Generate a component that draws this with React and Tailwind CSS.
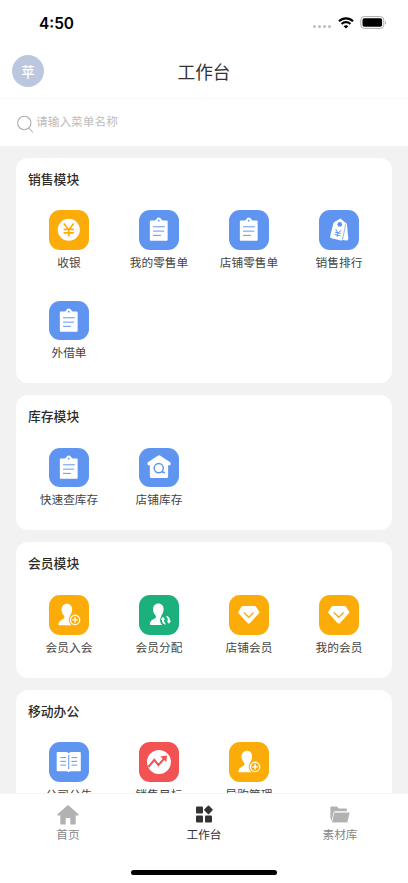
import React from "react";

const BLUE = "#5f95f1";
const ORANGE = "#fcac09";

const tones = {
  blue: "bg-[#5f95f1]",
  orange: "bg-[#fcac09]",
  green: "bg-[#1bb07c]",
  red: "bg-[#f25251]",
};

function Yen() {
  return (
    <>
      <circle cx="20" cy="20" r="11.2" fill="#fff" />
      <path d="M15 13.700 20 20l5-6.300M20 20v6.500M14.800 19.600h10.400M14.800 23.200h10.400" fill="none" stroke={ORANGE} strokeWidth="1.700" />
    </>
  );
}

function Clipboard() {
  return (
    <>
      <path d="M11.800 10.600h4.200l1.400-1a2.700 2.700 0 0 1 5.200 0l1.400 1h4.200q.8 0 .8.800v18.900q0 .8-.8.800H11.800q-.8 0-.8-.8V11.400q0-.8.8-.8Z" fill="#fff" />
      <circle cx="20" cy="10.800" r=".9" fill={BLUE} />
      <path d="M14.200 17h12M14.200 21.400h11.200M14.200 25.700h8" stroke={BLUE} strokeWidth="1" />
    </>
  );
}

function Tags() {
  return (
    <>
      <path d="m22 9 6.200 4.800 1.500 15.500q-.2 1.700-2 1.500l-5-.6Z" fill="#fff" />
      <path d="m21.700 8.700 5 4.600q.8 1 .6 2.200l-3 13.800q-.4 1.800-2.200 1.500l-9.600-2.300q-1.600-.4-1.200-2l3.200-12.700q.4-1.300 1.600-1.900Z" fill="#fff" />
      <path d="m27 14.500-3.200 15.500" stroke={BLUE} strokeWidth=".7" />
      <circle cx="21" cy="14.600" r="2.400" fill={BLUE} />
      <path d="m16.800 19.300 2.300 4 3.500-2.700M19.100 23.300l-.9 4M16 22.400l6 1.400M15.600 24.700l6 1.400" fill="none" stroke={BLUE} strokeWidth="1" />
    </>
  );
}

function StoreSearch() {
  return (
    <>
      <path d="M19.400 7.600q.9-.6 1.800 0l10.400 6.800q.5.400.4 1v1.200q-.1.800-1 .8h-1.500v11.400q0 1.600-1.600 1.600H12.600q-1.600 0-1.600-1.600V17.400H9.600q-.9 0-1-.8v-1.200q0-.6.400-1Z" fill="#fff" />
      <circle cx="20" cy="20.400" r="4.600" fill="none" stroke={BLUE} strokeWidth="1.500" />
      <path d="m23 24 3.200 1" stroke={BLUE} strokeWidth="1.500" />
    </>
  );
}

function Person() {
  return <path d="M18 8.800c3.400 0 5.600 2.400 5.400 6.200-.1 2.500-1 4.400-2.100 5.900-.6 1-.2 2.100.8 2.700l4.500 3.100v4H10.200q-1-.1-.7-1.200.5-3.300 3-4.300l2.200-1.100c1.200-.6 1.200-2.100.5-3.200-1.500-1.900-2.600-4.100-2.500-6.500C12.900 11.200 15 8.800 18 8.800Z" fill="#fff" />;
}

function PersonAdd() {
  return (
    <>
      <Person />
      <circle cx="26.400" cy="25.200" r="6.400" fill={ORANGE} />
      <circle cx="26.400" cy="25.200" r="4.700" fill="none" stroke="#fff" strokeWidth="1.300" />
      <path d="M23.500 25.200h5.800M26.400 22.300v5.800" stroke="#fff" strokeWidth="1.300" />
    </>
  );
}

function PersonSwap() {
  return (
    <>
      <g transform="translate(1.500 -.3)"><Person /></g>
      <circle cx="27.300" cy="25.600" r="6" fill="#1bb07c" />
      <path d="m21.900 25 2.400-2.900 2.300 2.900h-1.300q-.2 2.500 1.500 3.700v1.500q-3.800-1.400-3.500-5.200ZM32.700 26.200l-2.400 2.900-2.300-2.900h1.300q.2-2.500-1.500-3.700V21q3.800 1.400 3.500 5.200Z" fill="#fff" />
    </>
  );
}

function Diamond() {
  return (
    <>
      <path d="M14.200 11.100h11.600q1 0 1.600.8l3 4.700q.6 1 .1 1.700l-9.200 10q-1.300 1.200-2.600 0l-9.200-10q-.6-.8.100-1.700l3-4.700q.6-.8 1.600-.8Z" fill="#fff" />
      <path d="m15 17.800 5 4.800 5-4.800" fill="none" stroke={ORANGE} strokeWidth="1.300" />
    </>
  );
}

function Book() {
  return (
    <>
      <path d="M8.600 10.200h8.200q2.200 0 3.200 1.200 1-1.200 3.200-1.200h8.200q.8 0 .8.800v17.800q0 .8-.8.800H23q-2 0-3 .9-1-.9-3-.9H8.600q-.8 0-.8-.8V11q0-.8.8-.8Z" fill="#fff" />
      <path d="M20 13V27.500" stroke={BLUE} strokeWidth="1" />
      <path d="M11.500 15.800h5.700M11.500 19.600h5.700M11.500 23.400h5.700M22.800 15.800h5.700M22.800 19.600h5.700M22.800 23.400h5.700" stroke={BLUE} strokeWidth="1" />
    </>
  );
}

function Trend() {
  return (
    <>
      <circle cx="20.200" cy="20.200" r="12.100" fill="#fff" />
      <path d="m9.500 25.200 6-7 4.200 5.300 5.800-7" fill="none" stroke="#f25251" strokeWidth="2.100" />
      <path d="m21.500 14.600 6.800-.9-.6 6.600Z" fill="#f25251" />
    </>
  );
}

const sections = [
  {
    title: "销售模块",
    height: "h-[225.300px]",
    items: [
      ["收银", "orange", Yen],
      ["我的零售单", "blue", Clipboard],
      ["店铺零售单", "blue", Clipboard],
      ["销售排行", "blue", Tags],
      ["外借单", "blue", Clipboard],
    ],
  },
  {
    title: "库存模块",
    height: "h-[135.300px]",
    items: [
      ["快速查库存", "blue", Clipboard],
      ["店铺库存", "blue", StoreSearch],
    ],
  },
  {
    title: "会员模块",
    height: "h-[135.300px]",
    items: [
      ["会员入会", "orange", PersonAdd],
      ["会员分配", "green", PersonSwap],
      ["店铺会员", "orange", Diamond],
      ["我的会员", "orange", Diamond],
    ],
  },
  {
    title: "移动办公",
    height: "h-[135.300px]",
    items: [
      ["公司公告", "blue", Book],
      ["销售目标", "red", Trend],
      ["导购管理", "orange", PersonAdd],
    ],
  },
];

function Section({ title, height, items }) {
  return (
    <section className={`${height} shrink-0 rounded-[12px] bg-white px-2 pt-[11px]`}>
      <h2 className="h-[41.600px] pl-1 text-[12.800px] leading-[19px] font-medium text-[#2b2b2b]">{title}</h2>
      <div className="grid grid-cols-4">
        {items.map(([label, tone, Glyph]) => (
          <div key={label} className="flex h-[90.200px] flex-col items-center">
            <div className={`size-[39.500px] shrink-0 rounded-[11px] ${tones[tone]}`}>
              <svg viewBox="0 0 40 40" className="size-full"><Glyph /></svg>
            </div>
            <span className="mt-[3.200px] text-[11.700px] leading-[18px] whitespace-nowrap text-[#444]">{label}</span>
          </div>
        ))}
      </div>
    </section>
  );
}

function StatusBar() {
  return (
    <div className="flex h-[44px] shrink-0 items-center justify-between pt-[1px] pr-[21px] pl-[39px]">
      <span className="mt-[2px] font-[Inter,sans-serif] text-[15.400px] leading-5 font-semibold text-black">4:50</span>
      <div className="flex items-center">
        <div className="mt-2 mr-[7px] flex gap-[2px]">
          {[0, 1, 2, 3].map((n) => <i key={n} className="size-[3px] rounded-full bg-[#bcbcbc]" />)}
        </div>
        <svg width="16" height="12" viewBox="0 0 16 12" className="mr-[6px]" fill="none" stroke="#000" strokeWidth="2.100">
          <path d="M1 4.200a10 10 0 0 1 14 0M3.600 6.900a6.300 6.300 0 0 1 8.800 0" />
          <path d="M5.600 9.200a3.600 3.600 0 0 1 4.800 0L8 11.600Z" fill="#000" stroke="none" />
        </svg>
        <svg width="27" height="13" viewBox="0 0 27 13">
          <rect x=".8" y=".6" width="23" height="11.800" rx="3.400" fill="#fff" stroke="#aaa" strokeWidth="1" />
          <rect x="2.500" y="2.300" width="19.600" height="8.400" rx="1.800" />
          <path d="M25 4.500q1.800 2 0 4Z" fill="#aaa" />
        </svg>
      </div>
    </div>
  );
}

function TabBar() {
  return (
    <nav className="flex h-[90px] shrink-0 flex-col items-center border-t border-[#f5f5f5] bg-white">
      <div className="grid w-full grid-cols-3 text-[11.700px] leading-[18px] text-[#888]">
        <div className="flex flex-col items-center pt-[9.500px]">
          <svg width="22" height="21" viewBox="0 0 22 21" fill="#b2b2b2">
            <path d="M10.200 1.500q.8-.7 1.600 0l9.700 8.800q.6 1-.5 1.200h-2.300v8.200q0 .8-.8.800h-4.600v-5.600q0-.8-.8-.8h-3q-.8 0-.8.8v5.600H4.100q-.8 0-.8-.8v-8.200H1q-1.100-.2-.5-1.200Z" />
          </svg>
          <span>首页</span>
        </div>
        <div className="flex flex-col items-center pt-[9.500px] text-[#333]">
          <svg width="18" height="21" viewBox="0 0 18 21" fill="#333">
            <rect x="1" y="2.500" width="7" height="7" rx="1" />
            <rect x="1" y="11.500" width="7" height="7" rx="1" />
            <rect x="10" y="11.500" width="7" height="7" rx="1" />
            <rect x="10.200" y="2.600" width="6.500" height="6.500" rx=".8" transform="rotate(45 13.450 5.850)" />
          </svg>
          <span>工作台</span>
        </div>
        <div className="flex flex-col items-center pt-[9.500px]">
          <svg width="20" height="21" viewBox="0 0 20 21" fill="#b2b2b2">
            <path d="M.4 3.200q0-.7.7-.7h5.600q.5 0 .8.500l1 1.400h7.500q.9 0 .9.900v1.900H5.200q-1 0-1.300 1L1.600 17 .4 14Z" />
            <path d="M4.500 8.200h14.700q.8 0 .6.800l-2 9q-.2.800-1 .8H2.400q-.8 0-.6-.8l1.900-9.200q.2-.6.800-.6Z" stroke="#fff" strokeWidth=".6" />
          </svg>
          <span>素材库</span>
        </div>
      </div>
      <div className="mt-[27.500px] h-[5px] w-[146px] rounded-full bg-black" />
    </nav>
  );
}

export default function App() {
  return (
    <div className="flex h-[883px] w-[408px] flex-col overflow-hidden bg-[#f2f2f2] font-['Noto_Sans_CJK_SC',sans-serif]">
      <div className="shrink-0 bg-white">
        <StatusBar />
        <header className="grid h-[55px] grid-cols-[1fr_auto_1fr] items-center border-b border-[#f8f8f8] px-3">
          <div className="flex size-[32px] items-center justify-center rounded-full bg-[#bac7de] text-[13.500px] font-medium text-white">苹</div>
          <h1 className="text-[17.700px] leading-6 text-[#333]">工作台</h1>
        </header>
        <div className="flex h-[47px] items-center pl-[17px] text-[11.700px] text-[#bcbcbc]">
          <svg width="17" height="18" viewBox="0 0 17 18" className="mt-[2px] mr-[2px]" fill="none" stroke="#b0b0b0" strokeWidth="1.100">
            <circle cx="7.300" cy="8" r="6.700" />
            <path d="m12 13 3.500 4" strokeLinecap="round" />
          </svg>
          <span className="-mt-[3px]">请输入菜单名称</span>
        </div>
      </div>
      <main className="flex min-h-0 flex-1 flex-col gap-3 overflow-hidden px-4 pt-[11.900px]">
        {sections.map((section) => <Section key={section.title} {...section} />)}
      </main>
      <TabBar />
    </div>
  );
}
